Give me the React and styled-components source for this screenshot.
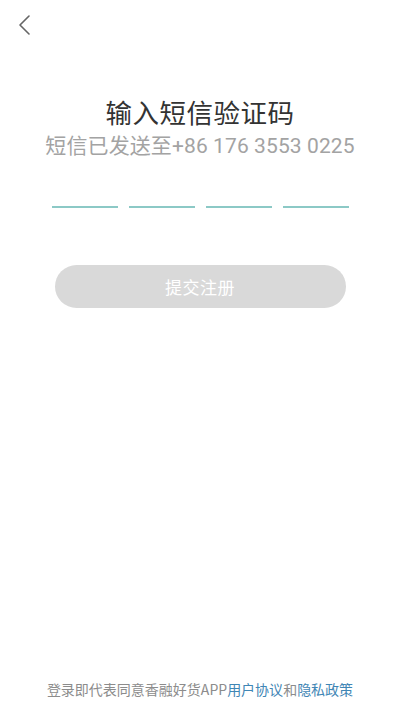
import React from 'react';
import styled, { createGlobalStyle } from 'styled-components';

const GlobalStyle = createGlobalStyle`
  html, body {
    margin: 0;
    padding: 0;
    background: #fff;
  }
  body {
    font-family: "Noto Sans CJK SC", "Noto Sans", sans-serif;
  }
`;

const Page = styled.div`
  min-height: 100vh;
  display: flex;
  flex-direction: column;
  align-items: center;
  box-sizing: border-box;
`;

const TopBar = styled.div`
  align-self: stretch;
  height: 50px;
  display: flex;
  align-items: center;
  padding-left: 14px;
`;

const BackButton = styled.button`
  border: 0;
  background: none;
  padding: 0;
  width: 20px;
  height: 24px;
  display: flex;
  align-items: center;
  justify-content: center;
  cursor: pointer;
`;

const Title = styled.h1`
  margin: 46px 0 0;
  font-size: 26.5px;
  line-height: 32px;
  font-weight: 400;
  color: #333;
  letter-spacing: 0.5px;
`;

const Subtitle = styled.p`
  margin: 4px 0 0;
  font-family: Roboto, "Noto Sans CJK SC", sans-serif;
  font-size: 21px;
  line-height: 28px;
  color: #a3a3a3;
  letter-spacing: 0.1px;
`;

const CodeRow = styled.div`
  margin-top: 46px;
  display: flex;
  gap: 11px;
`;

const CodeSlot = styled.div`
  width: 66px;
  height: 2px;
  background: ${p => (p.$active ? '#4fb0ab' : '#8cc9c6')};
`;

const SubmitButton = styled.button`
  margin-top: 57px;
  width: 291px;
  height: 43px;
  border: 0;
  border-radius: 22px;
  background: #d9d9d9;
  color: #fff;
  font-family: inherit;
  font-size: 17px;
  letter-spacing: 0.5px;
  cursor: default;
`;

const Footer = styled.p`
  margin: auto 0 0;
  padding-bottom: 11px;
  font-size: 14px;
  line-height: 20px;
  color: #8c8c8c;
  white-space: nowrap;
`;

const Link = styled.a`
  color: #3f86b5;
  text-decoration: none;
`;

export default function App() {
  return (
    <>
      <GlobalStyle />
      <Page>
        <TopBar>
          <BackButton aria-label="返回">
            <svg width="12" height="20" viewBox="0 0 12 20" fill="none">
              <path d="M11 1 L2 10 L11 19" stroke="#666" strokeWidth="1.6" strokeLinecap="round" strokeLinejoin="round" />
            </svg>
          </BackButton>
        </TopBar>
        <Title>输入短信验证码</Title>
        <Subtitle>短信已发送至+86 176 3553 0225</Subtitle>
        <CodeRow>
          {[0, 1, 2, 3].map(i => (
            <CodeSlot key={i} />
          ))}
        </CodeRow>
        <SubmitButton disabled>提交注册</SubmitButton>
        <Footer>
          登录即代表同意香融好货APP<Link href="#">用户协议</Link>和<Link href="#">隐私政策</Link>
        </Footer>
      </Page>
    </>
  );
}
